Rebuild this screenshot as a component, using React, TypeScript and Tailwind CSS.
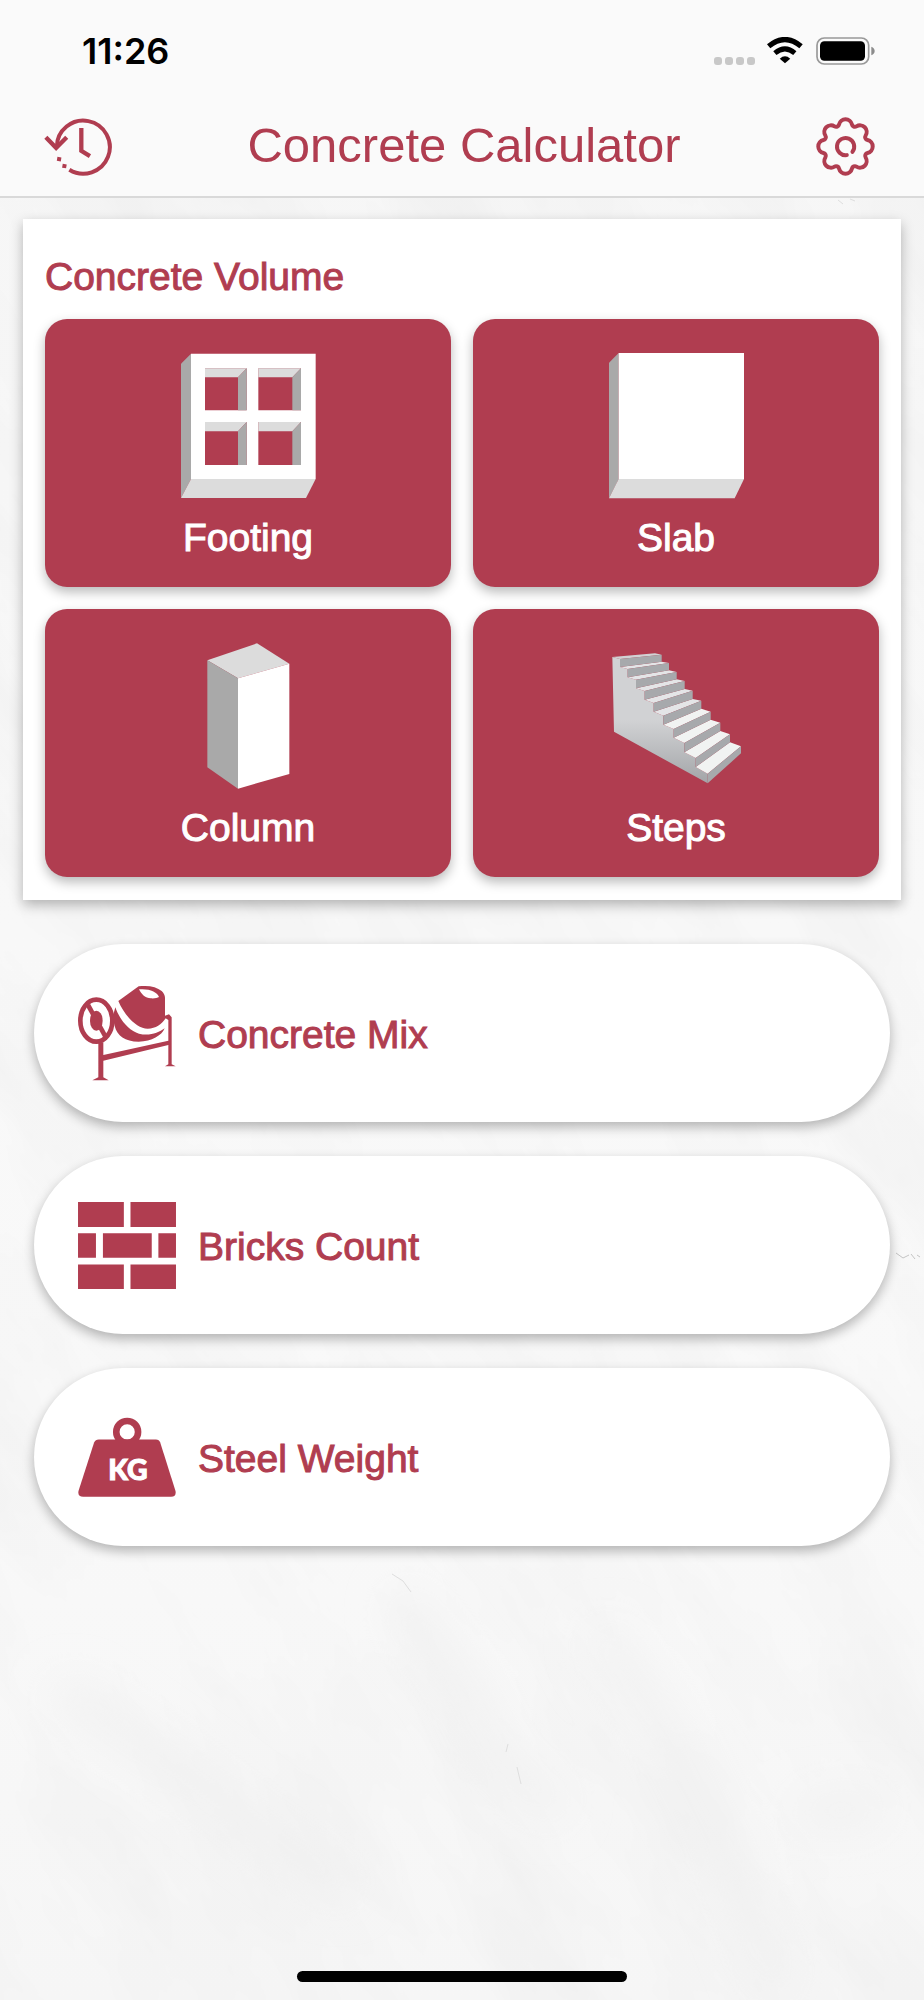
import type { ReactNode } from "react";

const LOBE = 20;
const FILLET = 9;

const polar = (radius: number, deg: number) => {
  const rad = (deg * Math.PI) / 180;
  return [radius * Math.sin(rad), -radius * Math.cos(rad)];
};

// Eight round lobes joined by small inner fillets
const gearPath = () => {
  const ratio = LOBE / (LOBE + FILLET);
  const touch = (lobeDeg: number, filletDeg: number) => {
    const [lx, ly] = polar(62, lobeDeg);
    const [fx, fy] = polar(74, filletDeg);
    return `${(lx + (fx - lx) * ratio).toFixed(2)} ${(ly + (fy - ly) * ratio).toFixed(2)}`;
  };
  let d = `M${touch(0, -22.5)}`;
  for (let i = 0; i < 8; i++) {
    const a = i * 45;
    d += `A${LOBE} ${LOBE} 0 0 1 ${touch(a, a + 22.5)}`;
    d += `A${FILLET} ${FILLET} 0 0 0 ${touch(a + 45, a + 22.5)}`;
  }
  return d + "Z";
};

const HistoryIcon = () => (
  <svg viewBox="134 350 204 178" className="h-[59px] w-[68px]" fill="none" stroke="currentColor" strokeWidth="12" aria-hidden="true">
    <path d="M172 440A80 80 0 1 1 210 509" />
    <path d="M139 411L170 443L202 411" strokeWidth="13" />
    <path d="M246 383V452L272 468" strokeWidth="13" />
    <path d="M173 476L185 478M189 497L201 499" strokeWidth="12" />
  </svg>
);

const GearIcon = () => (
  <svg viewBox="-89 -89 178 178" className="size-[59px]" fill="none" stroke="currentColor" strokeWidth="12" aria-hidden="true">
    <path d={gearPath()} />
    <path d="M4 26A26 26 0 1 1 21 16" strokeLinecap="round" />
  </svg>
);

const WifiIcon = () => (
  <svg viewBox="917 110 110 80" className="h-[27px] w-[36px]" fill="none" stroke="#000" aria-hidden="true">
    <path d="M922 137Q972 96 1021 137" strokeWidth="16" />
    <path d="M941 158Q972 132 1002 158" strokeWidth="15" />
    <path d="M956 175Q972 160 988 175L972 189Z" fill="#000" stroke="none" />
  </svg>
);

const BatteryIcon = () => (
  <svg viewBox="1065 109 177 84" className="h-[28px] w-[59px]" aria-hidden="true">
    <rect x="1068" y="112" width="155" height="78" rx="22" fill="none" stroke="#999" strokeWidth="5" />
    <rect x="1077" y="122" width="135" height="58" rx="13" fill="#000" />
    <path d="M1231 138Q1241 142 1241 151Q1241 160 1231 164Z" fill="#8c8c8c" />
  </svg>
);

const FootingIcon = () => (
  <svg viewBox="483 428 405 438" className="h-[146px] w-[135px]" aria-hidden="true">
    <path d="M483 460L513 430V806L483 863Z" fill="#a9a9a9" />
    <path d="M513 806H887L858 863H483Z" fill="#dcdcdc" />
    <path d="M513 430H887V806H513ZM555 474V600H680V474ZM715 474V600H843V474ZM555 635V764H680V635ZM715 635V764H843V635Z" fill="#fff" fillRule="evenodd" />
    <path d="M555 474H680L654 501H555ZM715 474H843L817 501H715ZM555 635H680L654 663H555ZM715 635H843L817 663H715Z" fill="#dcdcdc" />
    <path d="M680 474V600H654V501ZM843 474V600H817V501ZM680 635V764H654V663ZM843 635V764H817V663Z" fill="#a9a9a9" />
  </svg>
);

const SlabIcon = () => (
  <svg viewBox="447 157 405 438" className="h-[146px] w-[135px]" aria-hidden="true">
    <path d="M447 186L476 157V536L447 593Z" fill="#a9a9a9" />
    <path d="M476 535H852L824 593H447Z" fill="#dcdcdc" />
    <path d="M476 157H852V535H476Z" fill="#fff" />
  </svg>
);

const ColumnIcon = () => (
  <svg viewBox="483 157 405 438" className="h-[146px] w-[135px]" aria-hidden="true">
    <path d="M562 209L711 158L808 219L654 263Z" fill="#dcdcdc" />
    <path d="M562 209L654 263V594L562 530Z" fill="#a9a9a9" />
    <path d="M654 263L808 219V550L654 594Z" fill="#fff" />
  </svg>
);

// Riser of each step: left x, left top, left bottom, right x, right top, right bottom
const RISERS = [
  [480, 205, 229, 605, 192, 213],
  [503, 235, 260, 627, 217, 239],
  [528, 267, 293, 650, 244, 266],
  [554, 301, 327, 674, 271, 295],
  [581, 337, 363, 698, 300, 325],
  [610, 375, 402, 724, 330, 354],
  [641, 415, 441, 752, 363, 387],
  [673, 457, 485, 781, 396, 421],
  [707, 502, 529, 810, 431, 455],
  [743, 549, 578, 843, 467, 488],
];

const StepsIcon = () => (
  <svg viewBox="447 157 405 438" className="h-[146px] w-[135px]" aria-hidden="true">
    <defs>
      <linearGradient id="stair-side" x1="0" y1="0" x2="0" y2="1">
        <stop offset="0.5" stopColor="#d1d2d4" />
        <stop offset="1" stopColor="#a3a5a8" />
      </linearGradient>
    </defs>
    <path
      d="M457 199L480 205V229L503 235V260L528 267V293L554 301V327L581 337V363L610 375V402L641 415V441L673 457V485L707 502V529L743 549V578L462 423Z"
      fill="url(#stair-side)"
    />
    <path d="M457 199L585 188L605 192L480 205Z" fill="#d1d2d4" />
    {RISERS.map(([lx, lt, lb, rx, rt, rb], i) => {
      const next = RISERS[i + 1];
      return (
        <g key={lx}>
          {next && (
            <path
              d={`M${lx} ${lb}L${rx} ${rb}L${next[3]} ${next[4]}L${next[0]} ${next[1]}Z`}
              fill={i < 5 ? "#e4e5e7" : "#f1f3f2"}
            />
          )}
          <path d={`M${lx} ${lt}L${rx} ${rt}V${rb}L${lx} ${lb}Z`} fill="#a7a9ac" />
        </g>
      );
    })}
  </svg>
);

const MixerIcon = () => (
  <svg viewBox="174 166 294 288" className="h-[96px] w-[98px]" fill="currentColor" aria-hidden="true">
    <ellipse cx="229" cy="273" rx="48" ry="63" fill="none" stroke="currentColor" strokeWidth="14" />
    <ellipse cx="229" cy="273" rx="19" ry="30" />
    <path d="M204 226L256 320" stroke="currentColor" strokeWidth="14" />
    <path
      d="M295 214L356 170C385 166 410 171 425 184C431 190 435 197 435 204V258L447 254L455 263V404L467 410H435L445 404V346L250 393V443L266 452H217L235 443V338H250V376L445 333V271L437 266C424 284 408 297 383 297C351 297 314 259 295 214ZM357 179C364 194 377 206 392 206C403 207 412 205 417 202C413 187 387 176 357 179Z"
      fillRule="evenodd"
    />
    <path d="M286 233C298 268 325 302 357 312C387 320 415 310 434 296C425 318 396 335 356 336C315 336 291 318 284 289L278 262Z" />
  </svg>
);

const BricksIcon = () => (
  <svg viewBox="174 155 295 262" className="h-[87px] w-[98px]" fill="currentColor" aria-hidden="true">
    <path d="M174 155H312V230H174ZM332 155H469V230H332ZM174 249H228V323H174ZM249 249H396V323H249ZM416 249H469V323H416ZM174 343H312V417H174ZM332 343H469V417H332Z" />
  </svg>
);

const WeightIcon = () => (
  <svg viewBox="174 171 295 242" className="h-[80px] w-[98px]" fill="currentColor" aria-hidden="true">
    <circle cx="322" cy="216" r="33" fill="none" stroke="currentColor" strokeWidth="20" />
    <path d="M236 239H409Q419 239 422 248L468 394Q472 412 455 412H189Q171 412 175 394L222 248Q226 239 236 239Z" />
    <text
      x="324"
      y="362"
      textAnchor="middle"
      fill="#fff"
      stroke="#fff"
      strokeWidth="3"
      className="font-['Lato',sans-serif] text-[86px] font-black"
    >
      KG
    </text>
  </svg>
);

const TILES: { label: string; icon: ReactNode }[] = [
  { label: "Footing", icon: <FootingIcon /> },
  { label: "Slab", icon: <SlabIcon /> },
  { label: "Column", icon: <ColumnIcon /> },
  { label: "Steps", icon: <StepsIcon /> },
];

const ROWS: { label: string; icon: ReactNode }[] = [
  { label: "Concrete Mix", icon: <MixerIcon /> },
  { label: "Bricks Count", icon: <BricksIcon /> },
  { label: "Steel Weight", icon: <WeightIcon /> },
];

const Marble = () => (
  <svg
    viewBox="0 0 924 2000"
    preserveAspectRatio="xMidYMid slice"
    className="absolute inset-0 -z-10 size-full"
    fill="none"
    aria-hidden="true"
  >
    <defs>
      <filter id="soft" x="-30%" y="-30%" width="160%" height="160%">
        <feGaussianBlur stdDeviation="22" />
      </filter>
      <filter id="grain" x="0" y="0" width="100%" height="100%">
        <feTurbulence type="fractalNoise" baseFrequency="0.012 0.004" numOctaves="5" seed="7" />
        <feColorMatrix values="0 0 0 0 0.8  0 0 0 0 0.8  0 0 0 0 0.8  0.7 0 0 0 -0.25" />
      </filter>
      <linearGradient id="stone" x1="0" y1="0" x2="0" y2="1">
        <stop offset="0" stopColor="#f6f6f6" />
        <stop offset="0.7" stopColor="#f9f9f9" />
        <stop offset="1" stopColor="#f6f6f6" />
      </linearGradient>
    </defs>
    <rect width="924" height="2000" fill="url(#stone)" />
    <rect x="-900" y="-400" width="2700" height="2800" filter="url(#grain)" transform="rotate(-32 462 1000)" />
    <g filter="url(#soft)" stroke="#f0f0f0" strokeWidth="30">
      <path d="M60 1690L130 1735L210 1790L290 1850L350 1890" />
      <path d="M400 1600L460 1680L500 1760L560 1810" />
      <path d="M600 1630L670 1740L730 1860L780 1990" />
      <path d="M800 1815L880 1805" />
    </g>
    <g stroke="#dedede" strokeWidth="1">
      <path d="M392 1574L403 1581L411 1592M517 1767L521 1784M508 1744L506 1752" />
      <path d="M838 200L843 204M850 199L855 201" />
      <path d="M896 1253L903 1258L909 1255M911 1254L915 1259M917 1255L920 1257" stroke="#c4c4c4" />
    </g>
  </svg>
);

export default function App() {
  return (
    <div className="relative isolate flex min-h-screen flex-col overflow-hidden font-['Liberation_Sans',sans-serif] text-[#b03d50]">
      <Marble />

      <header className="border-b-2 border-[#d9d9d9] bg-[#fafafa]">
        <div className="flex h-[101px] items-center justify-between pr-[49px] pl-[82px] text-black">
          <span className="font-['Inter',sans-serif] text-[36px] font-semibold">11:26</span>
          <div className="flex items-center">
            <div className="mr-3 flex gap-[3px] self-end">
              <span className="size-2 rounded-[3px] bg-[#c8c8c8]" />
              <span className="size-2 rounded-[3px] bg-[#c8c8c8]" />
              <span className="size-2 rounded-[3px] bg-[#c8c8c8]" />
              <span className="size-2 rounded-[3px] bg-[#c8c8c8]" />
            </div>
            <div className="mr-[13px]">
              <WifiIcon />
            </div>
            <BatteryIcon />
          </div>
        </div>
        <div className="flex h-[95px] items-center justify-between pr-[49px] pb-[5px] pl-11">
          <button type="button" aria-label="History">
            <HistoryIcon />
          </button>
          <h1 className="pb-[3px] text-[49px] leading-[60px]">Concrete Calculator</h1>
          <button type="button" aria-label="Settings">
            <GearIcon />
          </button>
        </div>
      </header>

      <main className="flex-1">
        <section className="mx-[23px] mt-[21px] bg-white px-[22px] pt-[34px] pb-[23px] shadow-[0_5px_12px_rgba(0,0,0,0.28)]">
          <h2 className="mb-[18px] text-[39px] leading-[48px] [-webkit-text-stroke:1px_currentColor]">Concrete Volume</h2>
          <div className="grid grid-cols-2 gap-[22px]">
            {TILES.map(({ label, icon }) => (
              <button
                key={label}
                type="button"
                className="flex flex-col items-center gap-[15px] rounded-[22px] bg-[#b03d50] pt-[34px] pb-[25px] text-white shadow-[0_5px_12px_rgba(0,0,0,0.28)]"
              >
                {icon}
                <span className="text-[39px] leading-[48px] [-webkit-text-stroke:1px_currentColor]">{label}</span>
              </button>
            ))}
          </div>
        </section>

        <div className="mx-[34px] mt-11 flex flex-col gap-[34px]">
          {ROWS.map(({ label, icon }) => (
            <button
              key={label}
              type="button"
              className="flex h-[178px] items-center gap-[22px] rounded-full bg-white pl-11 shadow-[0_5px_12px_rgba(0,0,0,0.28)]"
            >
              {icon}
              <span className="pt-1 text-[39px] leading-[48px] [-webkit-text-stroke:1px_currentColor]">{label}</span>
            </button>
          ))}
        </div>
      </main>

      <div className="mx-auto mb-[18px] h-[11px] w-[330px] rounded-full bg-black" />
    </div>
  );
}
